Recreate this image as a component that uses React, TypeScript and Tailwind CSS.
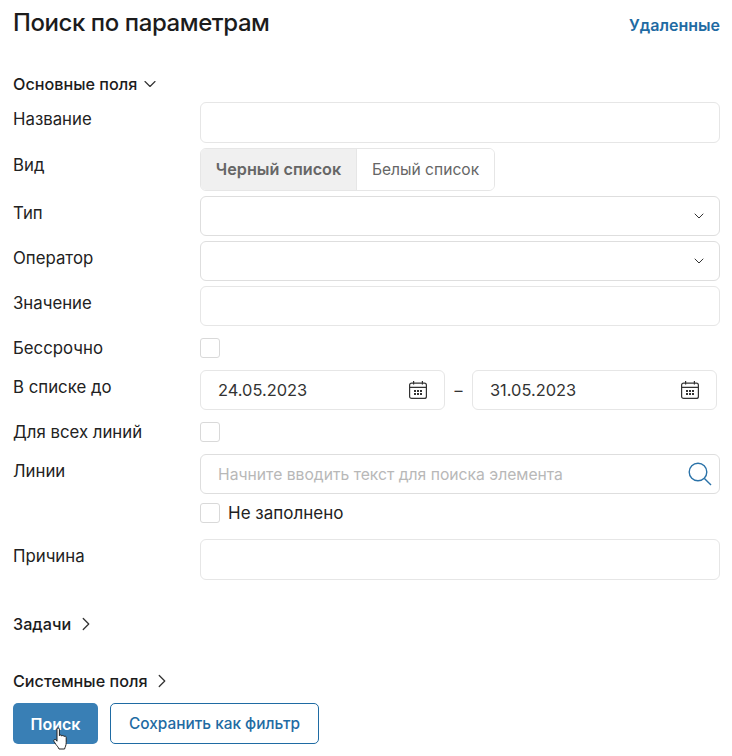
import React from "react";
import { ChevronDown, ChevronRight } from "lucide-react";

const inputBox = "h-[41px] w-full rounded-[6px] border border-[#e6e6e6] bg-white";

const Row = ({ label, labelClass = "pt-[5px]", className = "", children }: { label: string; labelClass?: string; className?: string; children: React.ReactNode }) => (
  <div className={`flex ${className}`}>
    <div className={`w-[187px] shrink-0 text-[16.8px] leading-[24px] text-[#222] ${labelClass}`}>{label}</div>
    <div className="min-w-0 flex-1">{children}</div>
  </div>
);

const Select = () => (
  <div className="flex h-[40px] w-full items-center justify-end rounded-[6px] border border-[#dedede] bg-white pr-[12px]">
    <ChevronDown className="h-[16px] w-[16px] text-[#333]" strokeWidth={1.5} />
  </div>
);

const Checkbox = () => <div className="h-[20px] w-[20px] rounded-[3px] border border-[#d9d9d9] bg-white" />;

const CalendarIcon = () => (
  <svg width="20" height="20" viewBox="0 0 20 20" fill="none" stroke="#333" strokeWidth="1.2">
    <rect x="1.6" y="3.2" width="16.8" height="15.2" rx="2" />
    <path d="M1.6 7.4h16.8M5.6 1v3.6M14.4 1v3.6" />
    <g fill="#333" stroke="none">
      <rect x="6" y="10" width="2" height="2" />
      <rect x="9" y="10" width="2" height="2" />
      <rect x="12" y="10" width="2" height="2" />
      <rect x="6" y="13" width="2" height="2" />
      <rect x="9" y="13" width="2" height="2" />
      <rect x="12" y="13" width="2" height="2" />
    </g>
  </svg>
);

const SearchIcon = () => (
  <svg width="24" height="24" viewBox="0 0 24 24" fill="none" stroke="#2a72a8" strokeWidth="1.4">
    <circle cx="10" cy="10" r="8.8" />
    <path d="M16.4 16.4 23 23" />
  </svg>
);

const DateInput = ({ value, className }: { value: string; className: string }) => (
  <div className={`flex h-[40px] items-center justify-between rounded-[6px] border border-[#e6e6e6] bg-white pl-[17px] pr-[16px] text-[16.4px] text-[#333] ${className}`}>
    <span>{value}</span>
    <CalendarIcon />
  </div>
);

const HandCursor = () => (
  <svg className="absolute left-[40px] top-[24px]" width="16" height="24" viewBox="0 0 16 24" fill="#fff" stroke="#222" strokeWidth="1" strokeLinejoin="round">
    <path d="M4 2.2c0-1.6 2.4-1.6 2.4 0v6.6c.4-1.2 2.3-1.1 2.4.3.5-1 2.2-.8 2.3.5.6-.8 2.1-.5 2.1.9v5.2c0 2.8-1.2 4.3-1.6 6.3H6c-.5-1.6-1.8-2.8-3.2-4.7L1 14.4c-.9-1.5 1-2.8 2.1-1.4L4 14.2z" />
  </svg>
);

export default function App() {
  return (
    <div className="h-[756px] w-[732px] overflow-hidden bg-white pl-[13px] pr-[12px] font-['Inter',sans-serif]">
      <div className="flex h-[75px] items-start justify-between pt-[7px]">
        <h1 className="text-[24px] font-medium leading-[32px] tracking-[-0.42px] text-[#1c1c1c]">Поиск по параметрам</h1>
        <a className="pt-[6px] text-[16px] font-semibold leading-[24px] text-[#1f6ba3]">Удаленные</a>
      </div>

      <div className="flex h-[18px] items-center gap-[3px] text-[16.2px] font-medium text-[#1c1c1c]">
        Основные поля
        <ChevronDown className="h-[20px] w-[20px] text-[#333]" strokeWidth={1.4} />
      </div>

      <Row label="Название" className="mt-[9px]">
        <div className={inputBox} />
      </Row>

      <Row label="Вид" className="mt-[5px]">
        <div className="flex h-[43px] w-[295px] overflow-hidden rounded-[6px] border border-[#e6e6e6] text-[15.6px] text-[#666]">
          <div className="flex w-[155px] items-center justify-center bg-[#f0f0f0] text-[16.2px] font-semibold">Черный список</div>
          <div className="flex flex-1 items-center justify-center border-l border-[#e6e6e6] bg-white">Белый список</div>
        </div>
      </Row>

      <Row label="Тип" className="mt-[5px]">
        <Select />
      </Row>

      <Row label="Оператор" className="mt-[5px]">
        <Select />
      </Row>

      <Row label="Значение" className="mt-[5px]">
        <div className="h-[40px] w-full rounded-[6px] border border-[#e6e6e6] bg-white" />
      </Row>

      <Row label="Бессрочно" labelClass="h-[20px] !leading-[20px]" className="mt-[12px]">
        <Checkbox />
      </Row>

      <Row label="В списке до" className="mt-[12px]">
        <div className="flex items-center">
          <DateInput value="24.05.2023" className="w-[245px]" />
          <span className="w-[27px] text-center text-[16px] text-[#333]">–</span>
          <DateInput value="31.05.2023" className="w-[245px]" />
        </div>
      </Row>

      <Row label="Для всех линий" labelClass="h-[20px] !leading-[20px]" className="mt-[12px]">
        <Checkbox />
      </Row>

      <Row label="Линии" className="mt-[12px]">
        <div className="flex h-[40px] items-center justify-between rounded-[6px] border border-[#dedede] bg-white pl-[17px] pr-[7px] text-[15.7px] text-[#b8b8b8]">
          <span className="pt-[1px]">Начните вводить текст для поиска элемента</span>
          <SearchIcon />
        </div>
        <div className="mt-[9px] flex h-[20px] items-center gap-[8px] text-[17px] text-[#222]">
          <Checkbox />
          <span className="pt-[1px]">Не заполнено</span>
        </div>
      </Row>

      <Row label="Причина" className="mt-[16px]">
        <div className={inputBox} />
      </Row>

      <div className="mt-[35px] flex h-[18px] items-center gap-[4px] text-[16.2px] font-medium text-[#1c1c1c]">
        Задачи
        <ChevronRight className="h-[22px] w-[22px] text-[#333]" strokeWidth={1.4} />
      </div>

      <div className="mt-[39px] flex h-[18px] items-center gap-[4px] text-[16.2px] font-medium text-[#1c1c1c]">
        Системные поля
        <ChevronRight className="h-[22px] w-[22px] text-[#333]" strokeWidth={1.4} />
      </div>

      <div className="mt-[13px] flex gap-[12px]">
        <div className="relative flex h-[41px] w-[85px] items-center justify-center rounded-[5px] bg-[#397fb5] text-[16px] font-semibold text-white">
          Поиск
          <HandCursor />
        </div>
        <div className="flex h-[41px] w-[209px] items-center justify-center rounded-[5px] border border-[#1f6ba3] bg-white text-[15.4px] font-medium text-[#1f6ba3]">
          Сохранить как фильтр
        </div>
      </div>
    </div>
  );
}
